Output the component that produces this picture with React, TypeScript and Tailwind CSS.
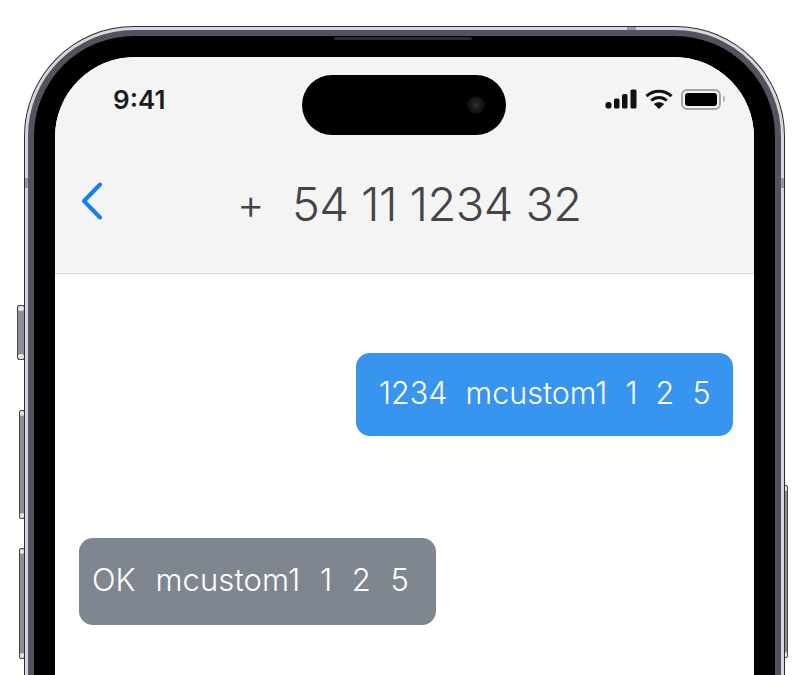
const SideButton = ({ className }: { className: string }) => (
  <div className={`absolute flex flex-col justify-between rounded-[2px] border border-[#4a4650] bg-[#8f8c96] ${className}`}>
    <div className="h-[5px] bg-[#e6e5e8] rounded-full" />
    <div className="h-[5px] bg-[#e6e5e8] rounded-full" />
  </div>
);

const StatusIcons = () => (
  <div className="flex items-center h-[20px]">
    {/* signal */}
    <svg width="33" height="20" viewBox="0 0 33 20" className="mr-[7px]">
      <rect x="0.5" y="13" width="6" height="6.5" rx="2.5" fill="#111" />
      <rect x="9" y="9.5" width="5.5" height="10" rx="1.5" fill="#111" />
      <rect x="17" y="5" width="5.5" height="14.5" rx="1.5" fill="#111" />
      <rect x="25.5" y="0.5" width="6" height="19" rx="1.5" fill="#111" />
    </svg>
    {/* wifi */}
    <svg width="28" height="20" viewBox="0 0 28 20" className="mr-[8px]">
      <path d="M1.5 7.2C8.5 0.6 19.5 0.6 26.5 7.2" fill="none" stroke="#111" strokeWidth="3" />
      <path d="M6.2 11.5C10.8 7.4 17.2 7.4 21.8 11.5" fill="none" stroke="#111" strokeWidth="3" />
      <path d="M14 20L8.8 15C11.8 12.6 16.2 12.6 19.2 15Z" fill="#111" />
    </svg>
    {/* battery */}
    <div className="w-[40px] h-[21px] rounded-[6px] border-2 border-[#a5a5a5] p-[2px]">
      <div className="w-full h-full rounded-[3px] bg-black" />
    </div>
    <div className="ml-[2px] w-[2px] h-[6px] rounded-r-sm bg-[#b5b5b5]" />
  </div>
);

export default function App() {
  return (
    <div className="relative w-[803px] h-[675px] overflow-hidden bg-white pt-[26px] pl-[24px] font-['Inter',sans-serif]">
      <SideButton className="left-[17px] top-[305px] w-[8px] h-[55px]" />
      <SideButton className="left-[19px] top-[410px] w-[6px] h-[109px]" />
      <SideButton className="left-[19px] top-[548px] w-[6px] h-[111px]" />
      <SideButton className="left-[783px] top-[485px] w-[5px] h-[173px]" />

      {/* phone body */}
      <div className="relative w-[761px] h-[700px] rounded-t-[110px] bg-[#2e2c33] p-[1px]">
        <div className="h-full rounded-t-[109px] bg-[#d8d6dc] p-[3px] pb-0">
          <div className="h-full rounded-t-[106px] bg-[#56505f] p-[6px] pb-0">
            <div className="relative h-full rounded-t-[100px] bg-black px-[21px] pt-[21px]">
              {/* speaker */}
              <div className="absolute left-[300px] top-[1px] w-[138px] h-[3px] rounded-full bg-[#2b2b2e]" />

              {/* screen */}
              <div className="h-full rounded-t-[80px] bg-white overflow-hidden">
                <header className="h-[217px] bg-[#f4f4f4] border-b border-[#d6d6d6]">
                  <div className="flex items-start pl-[58px] pt-[18px]">
                    <span className="w-[52px] mt-[10px] mr-[137px] text-[26px] leading-[30px] font-semibold text-[#1c1c1c]">9:41</span>
                    <div className="relative w-[204px] h-[60px] rounded-full bg-black">
                      <div className="absolute right-[21px] top-[21px] w-[18px] h-[18px] rounded-full bg-[radial-gradient(circle,#2c2c32_0%,#141416_55%,#000_100%)]" />
                    </div>
                    <div className="ml-[99px] mt-[14px]">
                      <StatusIcons />
                    </div>
                  </div>
                  <div className="flex items-center mt-[39px] pl-[26px] h-[60px]">
                    <svg width="22" height="38" viewBox="0 0 22 38" className="mb-[6px] text-[#147efb]">
                      <path d="M19 2.5L3 19L19 35.5" fill="none" stroke="currentColor" strokeWidth="4" strokeLinecap="round" strokeLinejoin="round" />
                    </svg>
                    <span className="ml-[134px] w-[55px] text-[42px] leading-[60px] font-light text-[#444449]">+</span>
                    <span className="text-[47px] leading-[60px] font-[350] tracking-[-0.55px] text-[#444449]">54 11 1234 32</span>
                  </div>
                </header>

                <div className="flex flex-col pl-[24px] pr-[21px] pt-[79px]">
                  <div className="self-end w-[377px] h-[83px] flex items-center pl-[23px] pb-[3px] rounded-[14px] bg-[#3895ef] text-white text-[30.5px] font-light whitespace-pre [word-spacing:0.5px]">
                    1234  mcustom1  1  2  5
                  </div>
                  <div className="mt-[102px] w-[357px] h-[87px] flex items-center pl-[13px] pb-[2px] rounded-[14px] bg-[#7f868f] text-white text-[31px] font-light tracking-[0.1px] whitespace-pre [word-spacing:1px]">
                    OK  mcustom1  1  2  5
                  </div>
                </div>
              </div>
            </div>
          </div>
        </div>

        {/* antenna bands */}
        <div className="absolute left-[1px] top-[152px] w-[3px] h-[10px] bg-[#9a98a0]" />
        <div className="absolute right-[1px] top-[152px] w-[3px] h-[10px] bg-[#9a98a0]" />
        <div className="absolute left-[603px] top-[1px] w-[9px] h-[3px] bg-[#9a98a0]" />
      </div>
    </div>
  );
}
